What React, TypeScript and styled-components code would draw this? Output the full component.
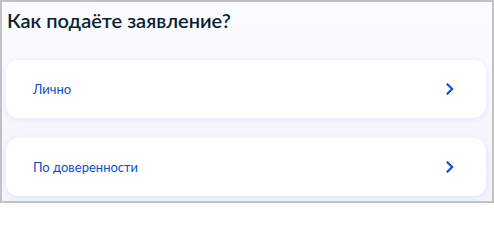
import React from 'react'
import styled, { createGlobalStyle } from 'styled-components'

const GlobalStyle = createGlobalStyle`
    html, body {
        margin: 0;
        padding: 0;
        background: #ffffff;
    }
    * {
        box-sizing: border-box;
    }
`

const options = ['Лично', 'По доверенности']

const Chevron = () => (
    <svg width="8" height="12" viewBox="0 0 8 12" fill="none">
        <path
            d="M1.6 1.4 L6.2 6 L1.6 10.6"
            stroke="#0d4cd3"
            strokeWidth="2.1"
            strokeLinecap="square"
            strokeLinejoin="miter"
        />
    </svg>
)

const App = () => {
    return (
        <>
            <GlobalStyle />
            <Frame>
                <Title>Как подаёте заявление?</Title>
                <OptionList>
                    {options.map((label) => (
                        <OptionCard key={label} type="button">
                            <OptionLabel>{label}</OptionLabel>
                            <IconBox>
                                <Chevron />
                            </IconBox>
                        </OptionCard>
                    ))}
                </OptionList>
            </Frame>
        </>
    )
}

export default App

const Frame = styled.div({
    width: '494px',
    height: '203px',
    border: '2px solid #c1c1c1',
    background: 'linear-gradient(180deg, #fbfcff 0%, #f7f9fd 35%, #f1f4fa 100%)',
    padding: '4px 6px 0 4px',
    display: 'flex',
    flexDirection: 'column',
    overflow: 'hidden',
})

const Title = styled.h2({
    margin: '0 0 26px 1px',
    fontFamily: 'Lato, "Noto Sans", sans-serif',
    fontSize: '20px',
    lineHeight: '28px',
    fontWeight: 600,
    color: '#0b1f33',
})

const OptionList = styled.div({
    display: 'flex',
    flexDirection: 'column',
    gap: '20px',
})

const OptionCard = styled.button({
    display: 'flex',
    alignItems: 'center',
    justifyContent: 'space-between',
    height: '58px',
    padding: '0 24px 0 27px',
    border: 'none',
    borderRadius: '12px',
    background: '#ffffff',
    boxShadow: '0 1px 5px rgba(86, 116, 170, 0.12)',
    cursor: 'pointer',
    textAlign: 'left',
})

const OptionLabel = styled.span({
    fontFamily: 'Lato, "Noto Sans", sans-serif',
    fontSize: '13px',
    lineHeight: '20px',
    color: '#0d4cd3',
})

const IconBox = styled.span({
    display: 'flex',
    alignItems: 'center',
    justifyContent: 'center',
    width: '24px',
    height: '24px',
})
